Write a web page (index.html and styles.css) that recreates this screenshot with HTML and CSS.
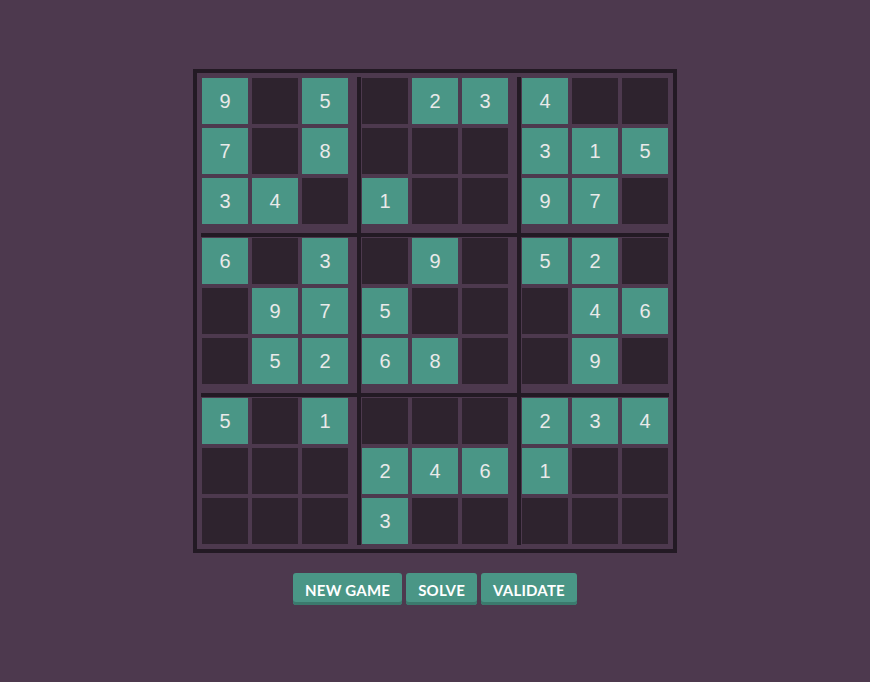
FILE: index.html
```html
<!DOCTYPE html>
<html lang="en">
<head>
<meta charset="utf-8">
<title>Sudoku</title>
<link rel="stylesheet" href="styles.css">
</head>
<body>
<main class="app">
  <div class="board">
    <div class="grid">
      <div class="vline vline-a"></div>
      <div class="vline vline-b"></div>
      <div class="hline hline-a"></div>
      <div class="hline hline-b"></div>

      <div class="cell given">9</div><div class="cell"></div><div class="cell given">5</div>
      <div class="cell"></div><div class="cell given">2</div><div class="cell given">3</div>
      <div class="cell given">4</div><div class="cell"></div><div class="cell"></div>

      <div class="cell given">7</div><div class="cell"></div><div class="cell given">8</div>
      <div class="cell"></div><div class="cell"></div><div class="cell"></div>
      <div class="cell given">3</div><div class="cell given">1</div><div class="cell given">5</div>

      <div class="cell given">3</div><div class="cell given">4</div><div class="cell"></div>
      <div class="cell given">1</div><div class="cell"></div><div class="cell"></div>
      <div class="cell given">9</div><div class="cell given">7</div><div class="cell"></div>

      <div class="cell given">6</div><div class="cell"></div><div class="cell given">3</div>
      <div class="cell"></div><div class="cell given">9</div><div class="cell"></div>
      <div class="cell given">5</div><div class="cell given">2</div><div class="cell"></div>

      <div class="cell"></div><div class="cell given">9</div><div class="cell given">7</div>
      <div class="cell given">5</div><div class="cell"></div><div class="cell"></div>
      <div class="cell"></div><div class="cell given">4</div><div class="cell given">6</div>

      <div class="cell"></div><div class="cell given">5</div><div class="cell given">2</div>
      <div class="cell given">6</div><div class="cell given">8</div><div class="cell"></div>
      <div class="cell"></div><div class="cell given">9</div><div class="cell"></div>

      <div class="cell given">5</div><div class="cell"></div><div class="cell given">1</div>
      <div class="cell"></div><div class="cell"></div><div class="cell"></div>
      <div class="cell given">2</div><div class="cell given">3</div><div class="cell given">4</div>

      <div class="cell"></div><div class="cell"></div><div class="cell"></div>
      <div class="cell given">2</div><div class="cell given">4</div><div class="cell given">6</div>
      <div class="cell given">1</div><div class="cell"></div><div class="cell"></div>

      <div class="cell"></div><div class="cell"></div><div class="cell"></div>
      <div class="cell given">3</div><div class="cell"></div><div class="cell"></div>
      <div class="cell"></div><div class="cell"></div><div class="cell"></div>
    </div>
  </div>
  <div class="controls">
    <button class="btn">NEW GAME</button>
    <button class="btn">SOLVE</button>
    <button class="btn">VALIDATE</button>
  </div>
</main>
</body>
</html>
```
FILE: styles.css
```css
html, body {
  margin: 0;
  padding: 0;
}

body {
  background: #4d394e;
  font-family: "Liberation Sans", Arial, sans-serif;
  min-height: 682px;
}

.app {
  display: flex;
  flex-direction: column;
  align-items: center;
  padding-top: 69px;
}

.board {
  border: 4px solid #231a24;
  padding: 5px;
  background: #4d394e;
}

.grid {
  display: grid;
  grid-template-columns: 46px 46px 46px 6px 46px 46px 46px 6px 46px 46px 46px;
  grid-template-rows: 46px 46px 46px 6px 46px 46px 46px 6px 46px 46px 46px;
  gap: 4px;
}

.vline {
  grid-row: 1 / -1;
  width: 4px;
  margin: -1px 0 -1px 5px;
  background: #231a24;
}
.vline-a { grid-column: 4; }
.vline-b { grid-column: 8; }

.hline {
  grid-column: 1 / -1;
  height: 4px;
  margin: 5px -1px 0 -1px;
  background: #231a24;
}
.hline-a { grid-row: 4; }
.hline-b { grid-row: 8; }

.cell {
  background: #2e232e;
  display: flex;
  align-items: center;
  justify-content: center;
  color: #e9e9e9;
  font-size: 20px;
}

.cell.given {
  background: #4a9686;
}

.controls {
  display: flex;
  gap: 4px;
  margin-top: 20px;
}

.btn {
  font-family: Lato, "Liberation Sans", sans-serif;
  font-weight: 700;
  font-size: 15px;
  letter-spacing: 0.2px;
  color: #ffffff;
  background: #4a9686;
  border: none;
  border-radius: 3px;
  height: 32px;
  padding: 1px 12px 0 12px;
  box-shadow: inset 0 -3px 0 #3b7a6d;
  cursor: pointer;
}
```
